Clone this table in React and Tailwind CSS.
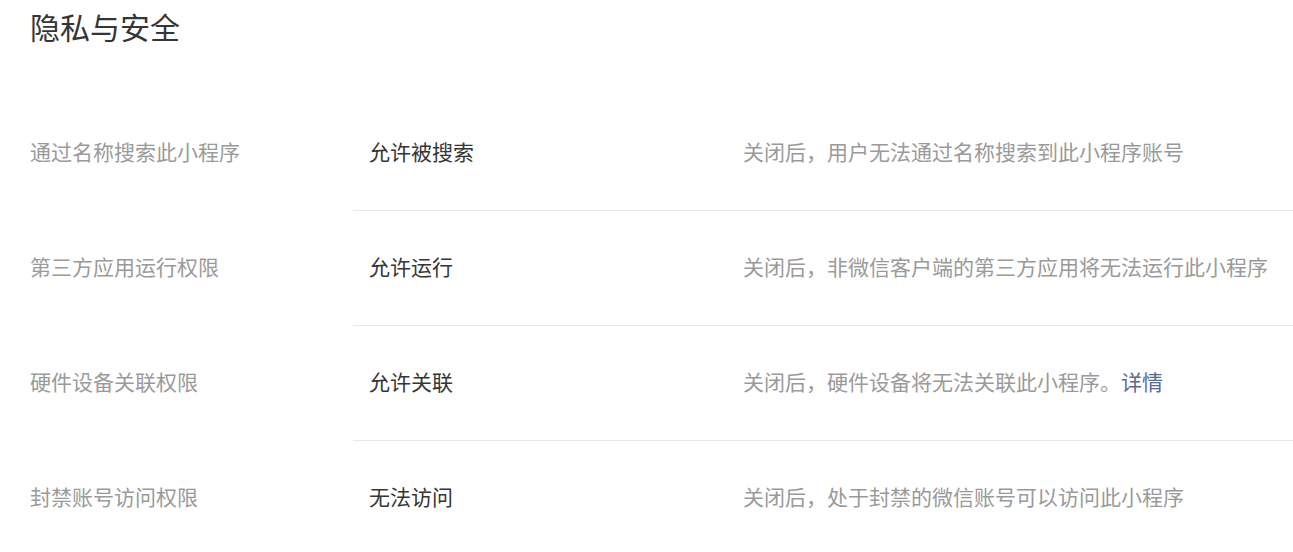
const rows = [
  {
    label: '通过名称搜索此小程序',
    value: '允许被搜索',
    desc: '关闭后，用户无法通过名称搜索到此小程序账号',
  },
  {
    label: '第三方应用运行权限',
    value: '允许运行',
    desc: '关闭后，非微信客户端的第三方应用将无法运行此小程序',
  },
  {
    label: '硬件设备关联权限',
    value: '允许关联',
    desc: '关闭后，硬件设备将无法关联此小程序。',
    link: '详情',
  },
  {
    label: '封禁账号访问权限',
    value: '无法访问',
    desc: '关闭后，处于封禁的微信账号可以访问此小程序',
  },
]

export default function App() {
  return (
    <div className="w-[1293px] h-[552px] overflow-hidden bg-white font-['Noto_Sans_CJK_SC','Noto_Sans',sans-serif]">
      {/* Title */}
      <div className="pt-[11px] pl-[30px] text-[30px] leading-[30px] text-[#353535]">隐私与安全</div>

      {/* Settings list */}
      <div className="mt-[55px]">
        {rows.map((row) => (
          <div key={row.label} className="flex h-[115px]">
            <div className="w-[353px] shrink-0 pl-[30px] pb-[3px] flex items-center text-[21px] text-[#9a9a9a]">
              {row.label}
            </div>
            <div className="flex-1 flex items-center pb-[3px] border-b border-[#e7e7e7] text-[21px]">
              <div className="w-[390px] shrink-0 pl-[16px] text-[#353535]">{row.value}</div>
              <div className="flex-1 text-[#9a9a9a]">
                {row.desc}
                {row.link && <a className="text-[#576b95] cursor-pointer">{row.link}</a>}
              </div>
            </div>
          </div>
        ))}
      </div>
    </div>
  )
}
